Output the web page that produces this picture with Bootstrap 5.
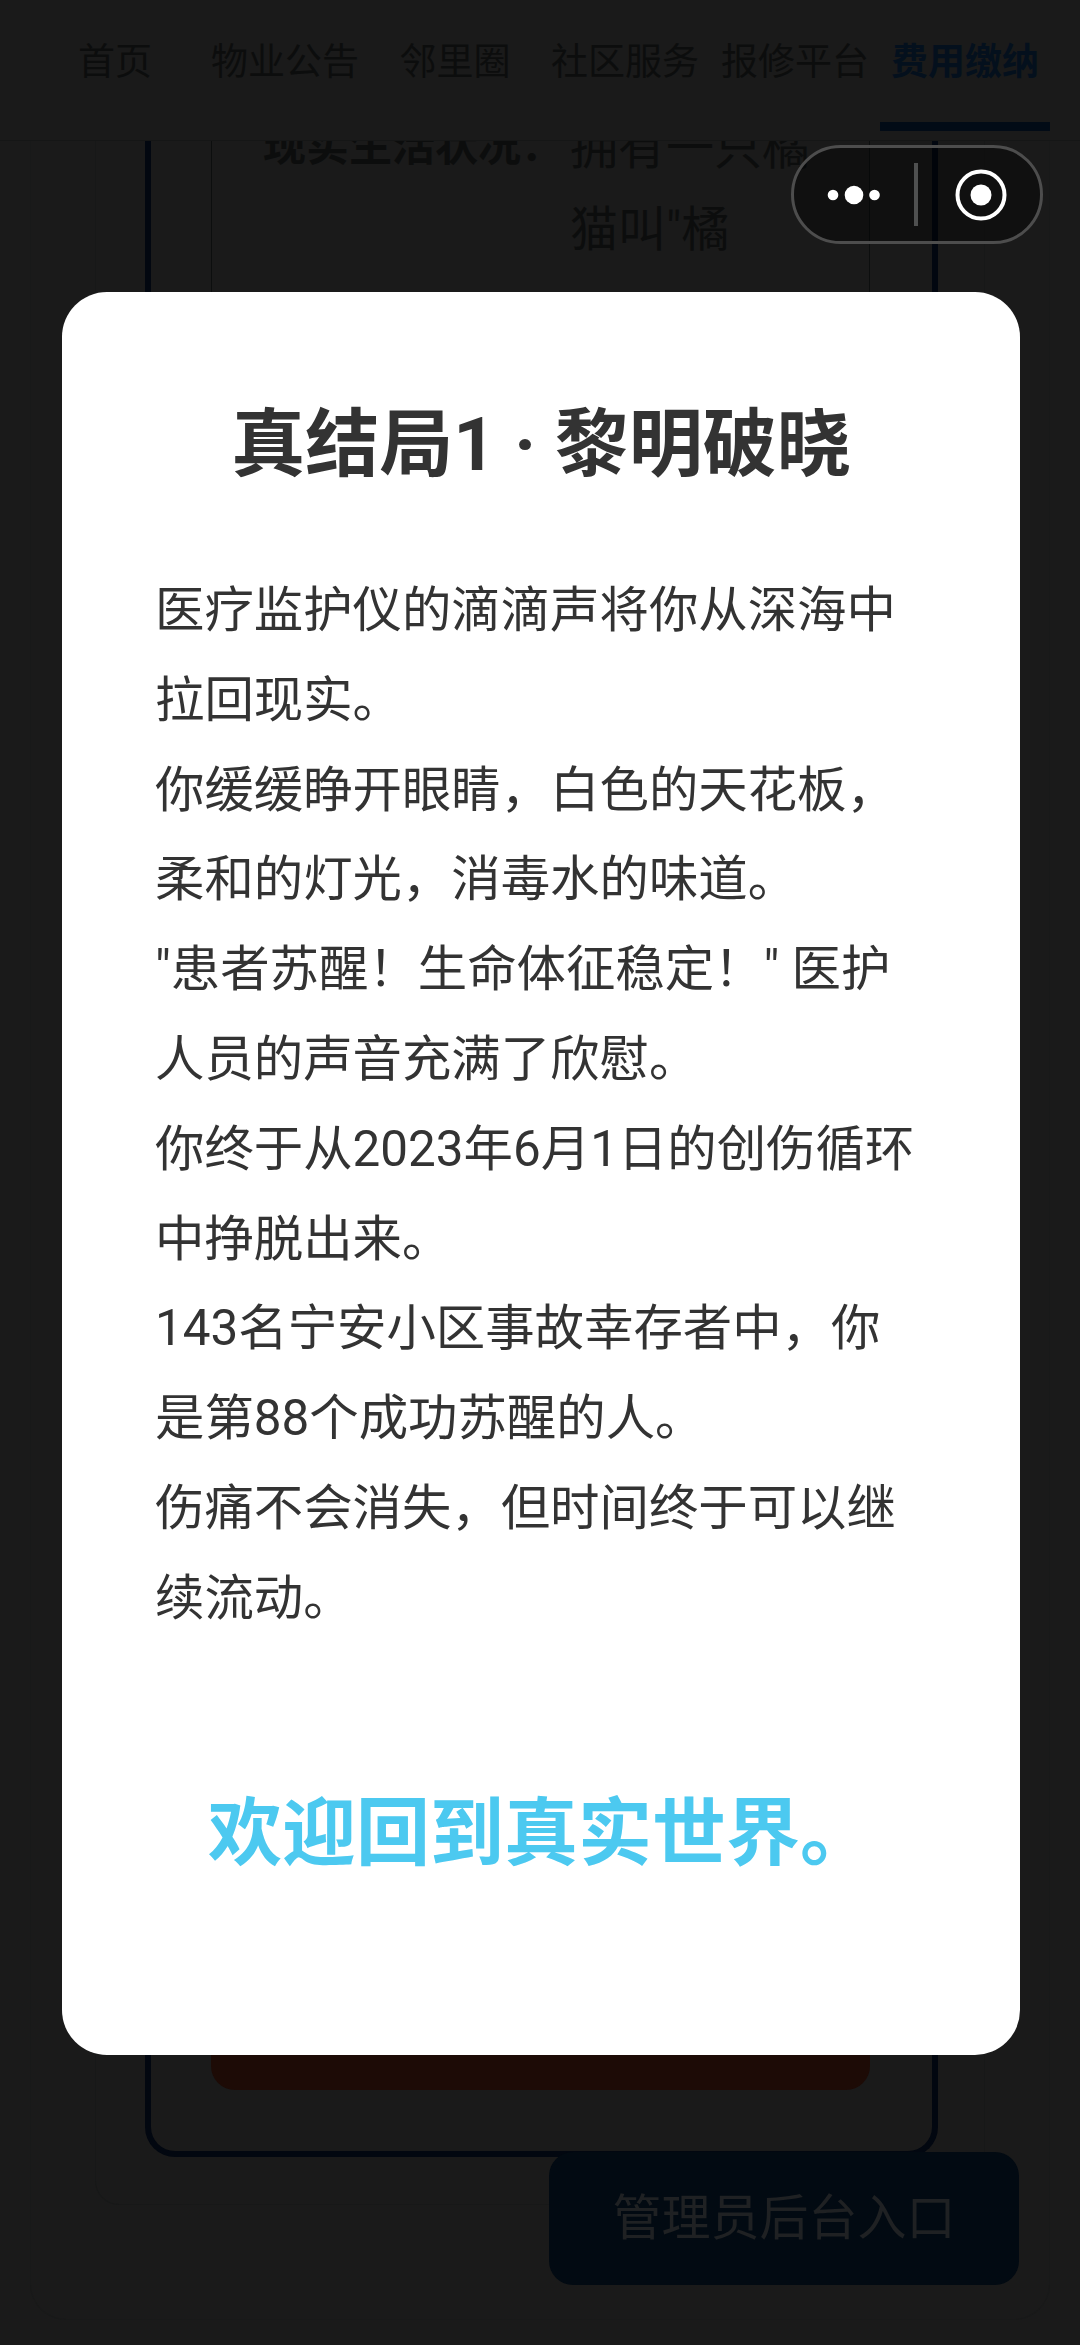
<!DOCTYPE html>
<html lang="zh-CN">
<head>
    <meta charset="UTF-8">
    <meta name="viewport" content="width=device-width, initial-scale=1.0">
    <title>真结局1 · 黎明破晓</title>
    <link href="https://cdn.jsdelivr.net/npm/bootstrap@5.3.3/dist/css/bootstrap.min.css" rel="stylesheet">
    <style>
        body {
            background-color: #1a1a1a;
            font-family: Roboto, "Noto Sans CJK SC", sans-serif;
            overflow: hidden;
        }
        .page-shell {
            width: 1080px;
            height: 2345px;
            position: relative;
            overflow: hidden;
        }
        /* dimmed page behind the dialog */
        .top-tabs {
            height: 141px;
            padding: 0 30px;
            border-bottom: 1px solid #151616;
            color: #0c0d0d;
            font-size: 37px;
        }
        .tab-cell {
            width: 170px;
            height: 131px;
            padding-top: 39px;
            line-height: 48px;
            text-align: center;
            white-space: nowrap;
        }
        .tab-active {
            color: #04101d;
            font-weight: 700;
            border-bottom: 9px solid #020b16;
        }
        .back-wrap {
            height: 2179px;
            margin: 0 30px;
            padding: 0 64px 114px;
            border: 1px solid #181919;
            border-top: 0;
            border-radius: 0 0 36px 36px;
        }
        .back-section {
            height: 100%;
            padding: 0 46px 47px 49px;
            border: 1px solid #171818;
            border-top: 0;
            border-radius: 0 0 24px 24px;
        }
        .back-card {
            height: 100%;
            padding: 0 62px 68px 60px;
            border: 6px solid #020710;
            border-top: 0;
            border-radius: 0 0 30px 30px;
        }
        .back-info {
            height: 1879px;
            padding: 0 0 0 51px;
            border: 1px solid #0c0e0e;
            border-width: 0 1px;
            color: #0c0d0d;
        }
        .back-label {
            width: 307px;
            margin-top: -19px;
            font-size: 43px;
            line-height: 48px;
            font-weight: 700;
            white-space: nowrap;
        }
        .back-value {
            width: 262px;
            margin-top: -34px;
            font-size: 48px;
            line-height: 82px;
        }
        .back-danger {
            height: 70px;
            background-color: #1d0b06;
            border-radius: 0 0 24px 24px;
        }
        .admin-btn {
            position: absolute;
            left: 549px;
            top: 2152px;
            width: 470px;
            height: 133px;
            background-color: #020a12;
            border: 0;
            border-radius: 24px;
            color: #1f2123;
            font-size: 49px;
            line-height: 133px;
            padding: 0;
        }
        /* wechat capsule */
        .capsule {
            position: absolute;
            left: 791px;
            top: 145px;
            width: 252px;
            height: 99px;
            background-color: rgba(0, 0, 0, .35);
            border: 3px solid #4d4d4d;
            border-radius: 50px;
        }
        .capsule-dots {
            flex: none;
            width: 120px;
        }
        .capsule-sep {
            flex: none;
            width: 4px;
            height: 63px;
            background-color: #4f5050;
        }
        .capsule-target {
            flex: none;
            width: 126px;
        }
        /* dialog */
        .ending-dialog {
            position: absolute;
            left: 62px;
            top: 292px;
            width: 958px;
            height: 1763px;
            background-color: #fff;
            border-radius: 45px;
            padding: 0 96px 0 93px;
        }
        .ending-title {
            margin: 0 0 0 3px;
            padding-top: 120px;
            line-height: 66px;
            font-size: 74px;
            font-weight: 700;
            color: #333;
            text-align: center;
            white-space: nowrap;
        }
        .ending-body {
            margin: 0;
            padding-top: 88px;
            font-size: 49.4px;
            line-height: 89.8px;
            color: #333;
            white-space: nowrap;
        }
        .ending-foot {
            margin: 0 0 0 3px;
            padding-top: 145px;
            font-size: 74px;
            line-height: 90px;
            font-weight: 700;
            color: #4cc9f0;
            text-align: center;
            white-space: nowrap;
        }
    </style>
</head>
<body>
    <div class="page-shell">
        <div class="top-tabs d-flex">
            <div class="tab-cell">首页</div>
            <div class="tab-cell">物业公告</div>
            <div class="tab-cell">邻里圈</div>
            <div class="tab-cell">社区服务</div>
            <div class="tab-cell">报修平台</div>
            <div class="tab-cell tab-active">费用缴纳</div>
        </div>

        <div class="back-wrap">
            <div class="back-section">
                <div class="back-card">
                    <div class="back-info d-flex overflow-hidden">
                        <div class="back-label">现实生活状况：</div>
                        <div class="back-value">拥有一只橘猫叫"橘</div>
                    </div>
                    <div class="back-danger"></div>
                </div>
            </div>
        </div>

        <button type="button" class="admin-btn">管理员后台入口</button>

        <div class="capsule d-flex align-items-center">
            <div class="capsule-dots d-flex justify-content-center">
                <svg width="54" height="20" viewBox="0 0 54 20" fill="#fff">
                    <circle cx="6" cy="10" r="5.3"/>
                    <circle cx="27" cy="10" r="9.3"/>
                    <circle cx="47.5" cy="10" r="5.3"/>
                </svg>
            </div>
            <div class="capsule-sep"></div>
            <div class="capsule-target d-flex justify-content-center">
                <svg width="52" height="52" viewBox="0 0 52 52">
                    <circle cx="26" cy="26" r="23.5" fill="none" stroke="#fff" stroke-width="4"/>
                    <circle cx="26" cy="26" r="10.5" fill="#fff"/>
                </svg>
            </div>
        </div>

        <div class="ending-dialog">
            <h2 class="ending-title">真结局1 · 黎明破晓</h2>
            <p class="ending-body">
                医疗监护仪的滴滴声将你从深海中<br>拉回现实。<br>
                你缓缓睁开眼睛，白色的天花板，<br>柔和的灯光，消毒水的味道。<br>
                "患者苏醒！生命体征稳定！" 医护<br>人员的声音充满了欣慰。<br>
                你终于从2023年6月1日的创伤循环<br>中挣脱出来。<br>
                143名宁安小区事故幸存者中，你<br>是第88个成功苏醒的人。<br>
                伤痛不会消失，但时间终于可以继<br>续流动。
            </p>
            <p class="ending-foot">欢迎回到真实世界。</p>
        </div>
    </div>
    <script src="https://cdn.jsdelivr.net/npm/bootstrap@5.3.3/dist/js/bootstrap.bundle.min.js"></script>
</body>
</html>
